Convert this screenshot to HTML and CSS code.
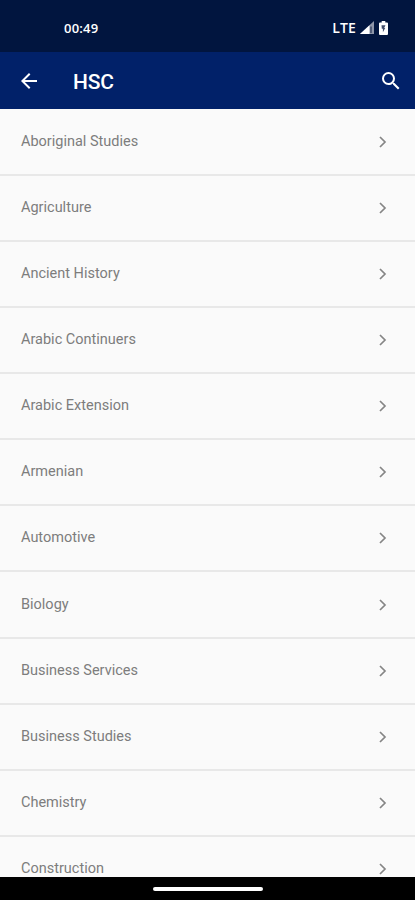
FILE: index.html
```html
<!DOCTYPE html>
<html lang="en">
<head>
<meta charset="utf-8">
<title>HSC</title>
<link rel="stylesheet" href="styles.css">
</head>
<body>
<div class="screen">
  <div class="status">
    <span class="time">00:49</span>
    <div class="indicators">
      <span class="network">LTE</span>
      <svg class="signal" viewBox="0 0 14 13"><path d="M0 13L14 0V13Z" fill="#8d95a9"/><path d="M0 13L9.5 4.2V13Z" fill="#fff"/><path d="M11 5.5V12" stroke="#17264b" stroke-width="1"/></svg>
      <svg class="battery" viewBox="0 0 9 14"><path d="M2.7 0h3.6v1.5H8a1 1 0 0 1 1 1V13a1 1 0 0 1-1 1H1a1 1 0 0 1-1-1V2.500a1 1 0 0 1 1-1h1.700z" fill="#fff"/><path d="M2.500 4.300h4L5.200 7h1L3.900 11.200V7.700H2.800z" fill="#414d6b"/></svg>
    </div>
  </div>
  <header class="bar">
    <svg class="back" viewBox="0 0 24 24"><path d="M20 11H7.830l5.590-5.590L12 4l-8 8 8 8 1.410-1.410L7.830 13H20z"/></svg>
    <h1>HSC</h1>
    <svg class="search" viewBox="0 0 24 24"><path d="M15.500 14h-.79l-.28-.27A6.470 6.470 0 0 0 16 9.500 6.500 6.500 0 1 0 9.500 16c1.610 0 3.090-.59 4.230-1.570l.27.280v.79l5 4.990L20.490 19zm-6 0a4.500 4.500 0 1 1 0-9 4.500 4.500 0 0 1 0 9z"/></svg>
  </header>
  <ul class="list">
    <li><span>Aboriginal Studies</span><svg viewBox="0 0 8 12"><path d="M1 1l5 5-5 5"/></svg></li>
    <li><span>Agriculture</span><svg viewBox="0 0 8 12"><path d="M1 1l5 5-5 5"/></svg></li>
    <li><span>Ancient History</span><svg viewBox="0 0 8 12"><path d="M1 1l5 5-5 5"/></svg></li>
    <li><span>Arabic Continuers</span><svg viewBox="0 0 8 12"><path d="M1 1l5 5-5 5"/></svg></li>
    <li><span>Arabic Extension</span><svg viewBox="0 0 8 12"><path d="M1 1l5 5-5 5"/></svg></li>
    <li><span>Armenian</span><svg viewBox="0 0 8 12"><path d="M1 1l5 5-5 5"/></svg></li>
    <li><span>Automotive</span><svg viewBox="0 0 8 12"><path d="M1 1l5 5-5 5"/></svg></li>
    <li><span>Biology</span><svg viewBox="0 0 8 12"><path d="M1 1l5 5-5 5"/></svg></li>
    <li><span>Business Services</span><svg viewBox="0 0 8 12"><path d="M1 1l5 5-5 5"/></svg></li>
    <li><span>Business Studies</span><svg viewBox="0 0 8 12"><path d="M1 1l5 5-5 5"/></svg></li>
    <li><span>Chemistry</span><svg viewBox="0 0 8 12"><path d="M1 1l5 5-5 5"/></svg></li>
    <li><span>Construction</span><svg viewBox="0 0 8 12"><path d="M1 1l5 5-5 5"/></svg></li>
  </ul>
  <div class="nav"><div class="handle"></div></div>
</div>
</body>
</html>
```
FILE: styles.css
```css
* { box-sizing: border-box; }
body { margin: 0; font-family: Roboto, sans-serif; background: #fafafa; }
.screen { display: flex; flex-direction: column; height: 900px; overflow: hidden; }
.status {
  flex: none; height: 52px; padding: 3px 27px 0 64px; background: #01153f; color: #fff;
  display: flex; align-items: center; justify-content: space-between;
}
.time { font: 600 13px/16px "Open Sans", sans-serif; letter-spacing: 0.2px; }
.indicators { display: flex; align-items: center; }
.network { font: 600 14px/16px "Open Sans", sans-serif; letter-spacing: 0.1px; }
.signal { width: 14px; height: 13px; margin-left: 4px; }
.battery { width: 9px; height: 14px; margin-left: 5px; }
.bar {
  flex: none; height: 57px; padding: 0 12px 0 17px; background: #012169; color: #fff;
  display: flex; align-items: center;
}
.bar svg { fill: #fff; }
.back { width: 24px; height: 24px; margin-top: 1px; }
.bar h1 { flex: 1; margin: 2px 0 0 32px; font-size: 21px; line-height: 24px; font-weight: 500; letter-spacing: -0.2px; }
.search { width: 24px; height: 24px; }
.list { flex: 1; min-height: 0; overflow: hidden; margin: 0; padding: 0.6px 0 0; list-style: none; background: #fafafa; }
.list li {
  height: 66.13px; padding: 0 28px 0 21px; border-bottom: 2px solid #e8e8e8;
  display: flex; align-items: center; justify-content: space-between;
}
.list span { font-size: 14.5px; line-height: 20px; color: #7d7d7d; }
.list svg { width: 8px; height: 12px; fill: none; stroke: #858585; stroke-width: 1.7; }
.nav { flex: none; height: 23px; background: #000; display: flex; justify-content: center; align-items: center; }
.handle { width: 110px; height: 4px; border-radius: 2px; background: #fff; }
```
